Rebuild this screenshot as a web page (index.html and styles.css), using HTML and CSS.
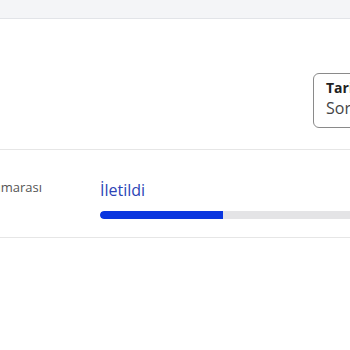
FILE: index.html
```html
<!DOCTYPE html>
<html lang="tr">
<head>
  <meta charset="UTF-8">
  <title>Kargo Takip</title>
  <link rel="stylesheet" href="styles.css">
</head>
<body>

  <div class="topbar"></div>

  <div class="page">
    <div class="tip-row">
      <div class="popover">
        <div class="popover-title">Tarih</div>
        <div class="popover-body">Sorgulama</div>
      </div>
    </div>

    <div class="detail-table">
      <div class="detail-row">
        <div class="detail-label">Takip numarası</div>
        <div class="detail-value">
          <div class="status-text">İletildi</div>
          <div class="progress">
            <div class="progress-bar" style="width: 44%"></div>
          </div>
        </div>
      </div>
    </div>
  </div>

</body>
</html>
```

FILE: styles.css
```css
/* Reset */
* {
  margin: 0;
  padding: 0;
  box-sizing: border-box;
  font-family: 'Open Sans', 'Noto Sans', sans-serif;
}

body {
  background-color: #ffffff;
  color: #333333;
  width: 350px;
  height: 350px;
  overflow: hidden;
}

.topbar {
  height: 19px;
  background-color: #f4f5f7;
  border-bottom: 1px solid #e2e4e8;
}

.tip-row {
  display: flex;
  justify-content: flex-end;
  padding-top: 54px;
}

.popover {
  width: 150px;
  margin-right: -113px;
  padding: 4px 12px 9px;
  border: 1px solid #8a8a8a;
  border-radius: 6px;
  background-color: #ffffff;
}

.popover-title {
  font-size: 14px;
  font-weight: 700;
  line-height: 20px;
  color: #222222;
}

.popover-body {
  font-size: 16px;
  line-height: 20px;
  color: #444444;
}

.detail-table {
  margin-top: 21px;
  margin-left: -51px;
  border-top: 1px solid #e6e6e6;
  border-bottom: 1px solid #e6e6e6;
}

.detail-row {
  display: grid;
  grid-template-columns: 151px 1fr;
  padding: 29px 0 18px;
}

.detail-label {
  margin-top: -3px;
  font-size: 13px;
  line-height: 22px;
  color: #555555;
  white-space: nowrap;
}

.status-text {
  font-size: 16px;
  line-height: 22px;
  color: #2c44b6;
}

.progress {
  width: 280px;
  height: 8px;
  margin-top: 10px;
  background-color: #e4e4e6;
  border-radius: 4px 0 0 4px;
  overflow: hidden;
}

.progress-bar {
  height: 100%;
  background-color: #0a36df;
  border-radius: 4px 0 0 4px;
}
```
